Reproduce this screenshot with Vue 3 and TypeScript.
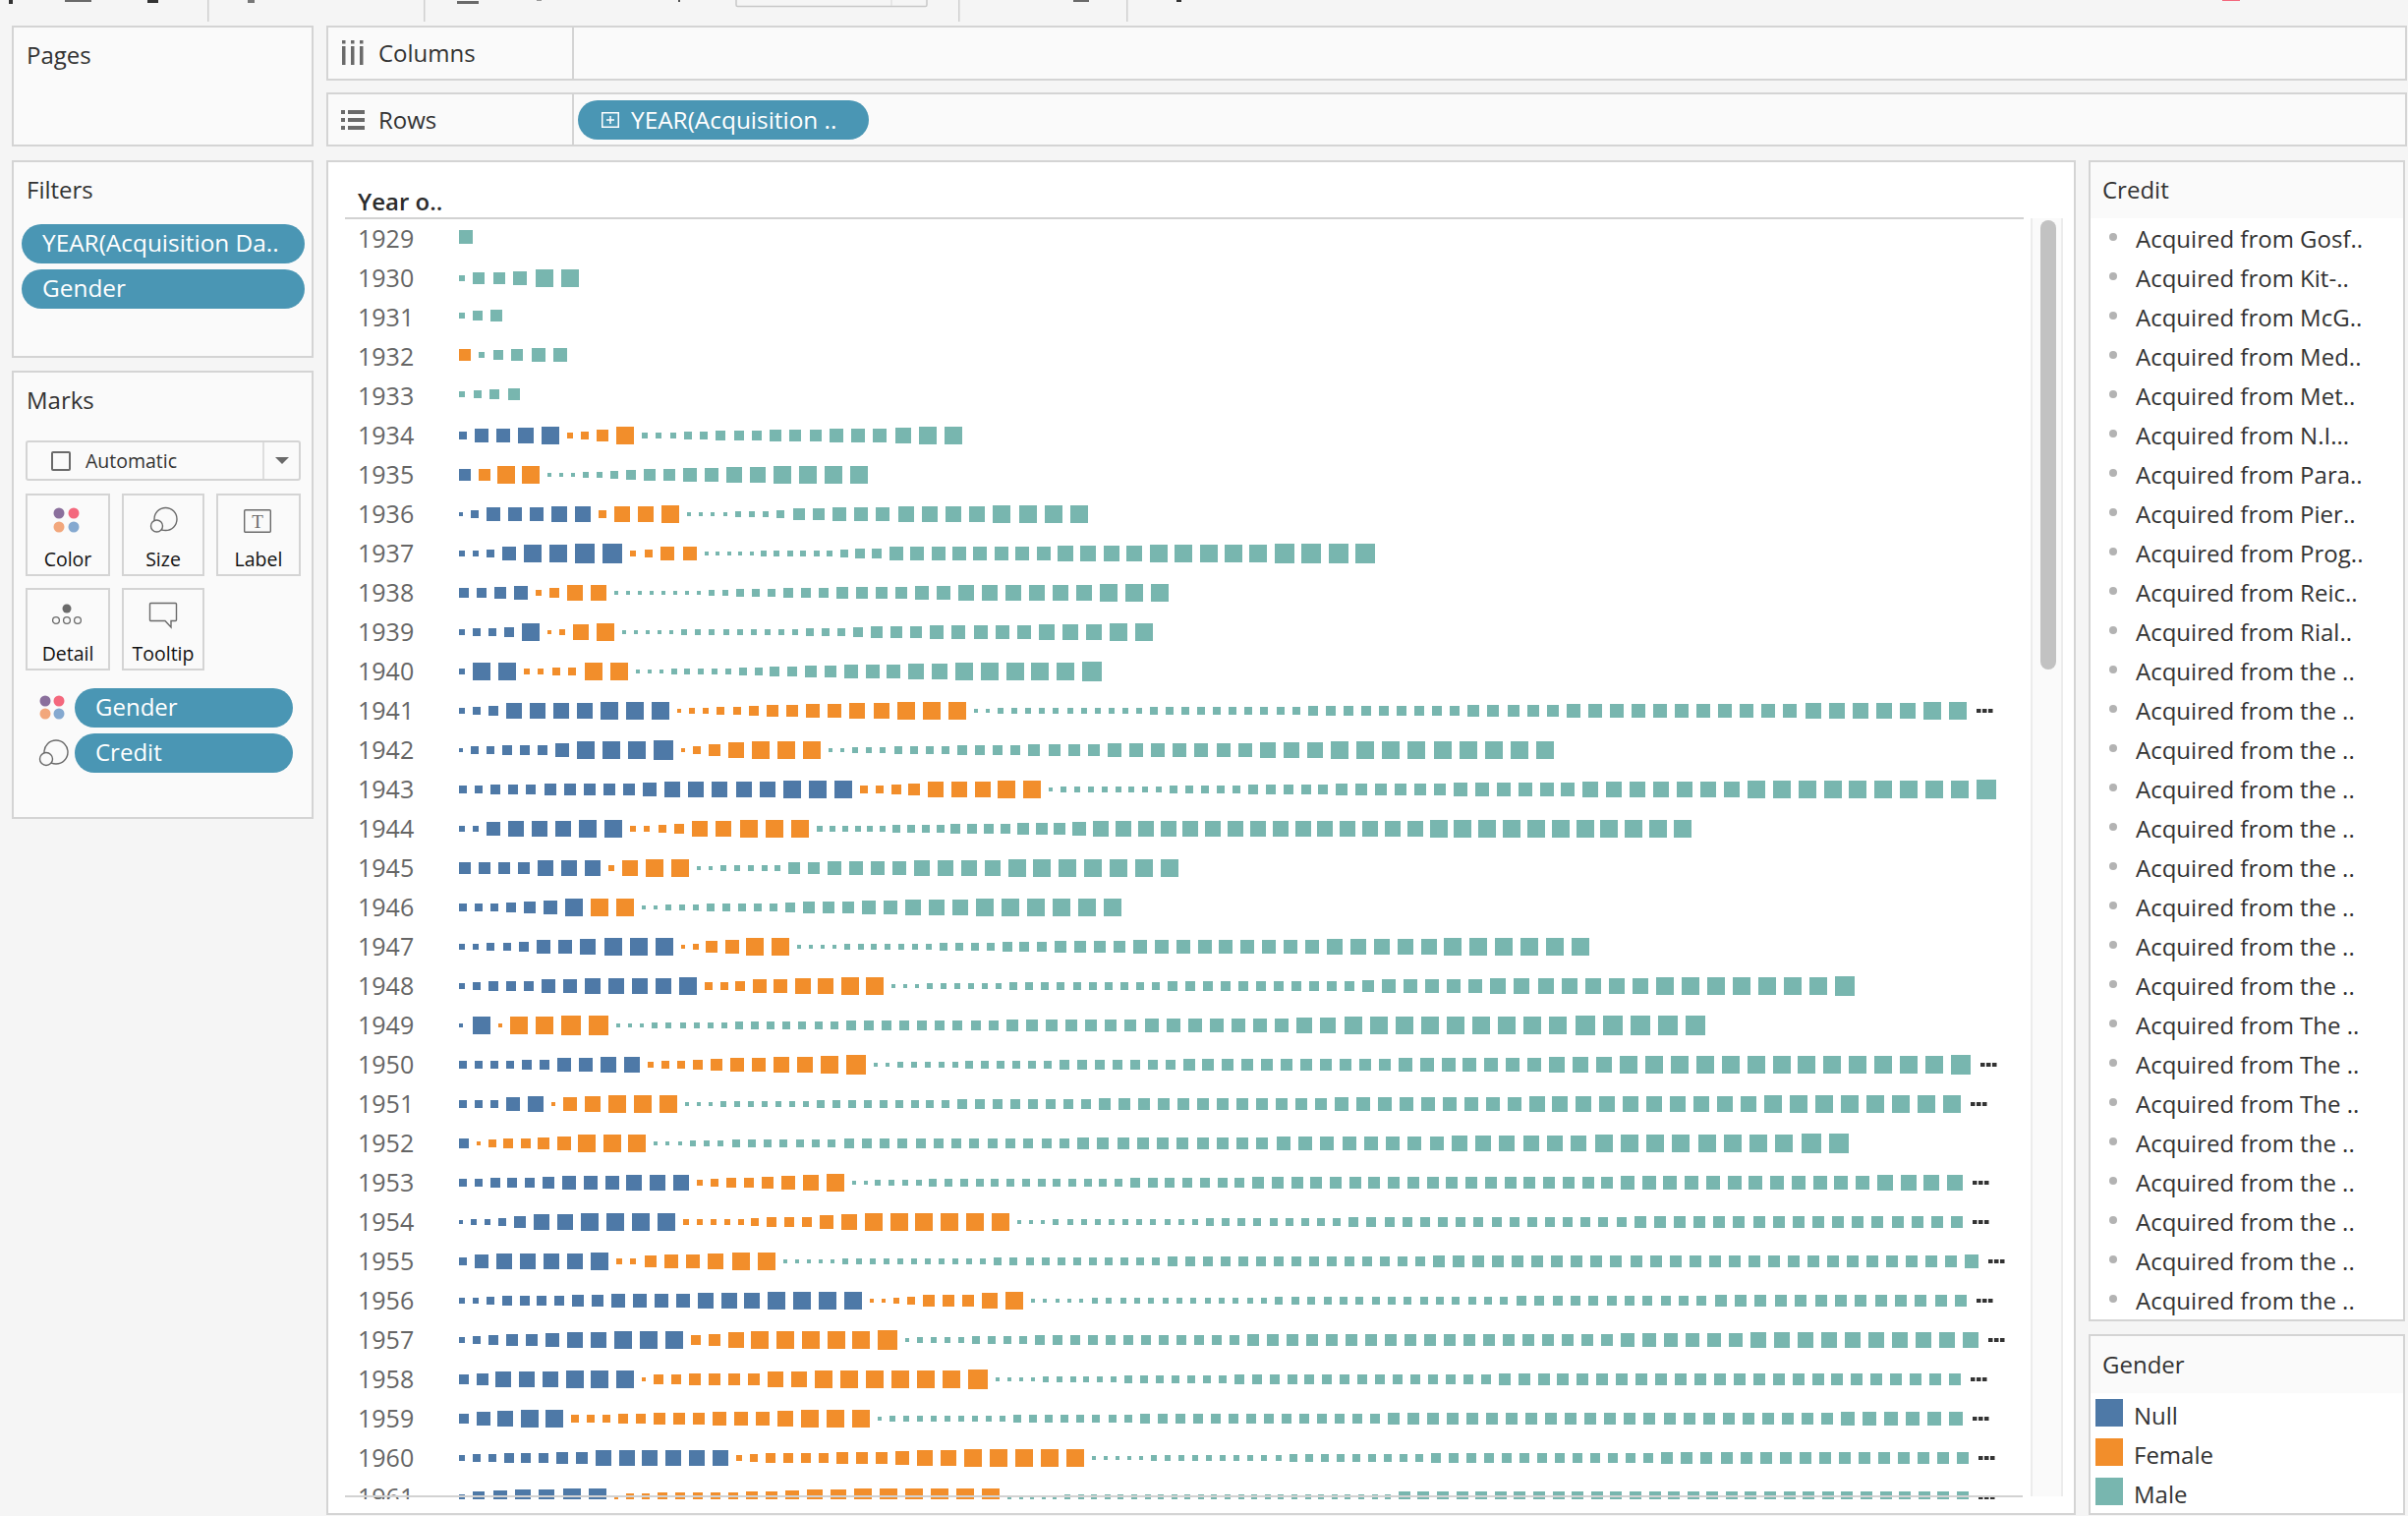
<script setup lang="ts">
type Raw = [string, number, string, number, string, number, boolean?]
interface Mark { x: number; y: number; s: number; c: string }

const NULL_C = '#4e79a7'
const FEMALE_C = '#f28e2b'
const MALE_C = '#78b6af'
const START_X = 468

// per year: null sizes, end x, female sizes, end x, male sizes, end x, overflow dots
const raw: Raw[] = [
  ['', 0, '', 0, '14', 482],
  ['', 0, '', 0, '6 12 12 14 18 18', 590],
  ['', 0, '', 0, '6 10 12', 512],
  ['', 0, '12', 480, '6 10 12 14 14', 578],
  ['', 0, '', 0, '6 8 10 12', 530],
  ['8 14 14 16 18', 570, '6 8 12 18', 646, '6*3 8*2 10*3 12*3 14*3 16 18*2', 980],
  ['12', 480, '12 18 18', 550, '4*3 6*2 8 10 12*2 14*2 16*2 18*4', 884],
  ['4 8 14*3 16*2', 602, '8 16 16 18', 692, '4*4 6*3 8 12*2 14*3 16*4 18*4', 1108],
  ['6 6 8 14 18 18 20 20', 634, '6 8 14 14', 710, '4*5 6*6 8 10*2 14*8 16*4 18*5 20*4', 1400],
  ['10 10 12 14', 538, '6 10 16 16', 618, '4*8 6*2 8*3 10*3 12*4 14*2 16*6 18*3', 1190],
  ['6 8 8 10 18', 550, '4 6 16 18', 626, '4*5 6*9 8*3 10 12*3 14*5 16*3 18*2', 1174],
  ['6 18 18', 526, '6 6 8 8 18 18', 640, '4*3 6*5 8*2 10*2 12*2 14*3 16*2 18*5 20', 1122],
  ['6 8 10 16*4 18*3', 682, '4 6 6 8 8 10 12 12 14 14 16 16 18*3', 984, '4*2 6*11 8*10 10*9 12*5 14*11 16*5 18*2', 2002, true],
  ['4 8 8 10 10 10 14 18 18 18 20', 686, '4 8 12 16 18*3', 836, '4*2 6*3 8*4 10*4 12*4 14*7 16*3 18*9', 1582],
  ['8 8 10 10 10 12*5 14 16*5 18*3', 868, '8 8 10 12 16*3 18*2', 1060, '4 6*8 8*5 10*5 12*6 14*6 16*7 18*9 20', 2032],
  ['6 6 14 16*3 18*2', 634, '6 6 8 10 16 16 18*3', 824, '6*6 8*4 10*4 12*3 14 16*15 18*11', 1722],
  ['12*4 16*3', 612, '6 16 18 18', 702, '4*2 6*5 12*2 14*4 16*4 18*7', 1200],
  ['8*3 10 12 14 18', 594, '18 18', 646, '4*2 6*3 8*5 10 12*3 14*2 16*3 18*6', 1142],
  ['6 6 8 8 10 14 14 16 18*3', 686, '4 6 12 14 18 18', 804, '4*4 6*7 8*4 10*3 12*4 14*9 16*5 18*6', 1618],
  ['6 8 10*3 14 14 16*3 16 18', 710, '8 8 10 14 14 16 16 18 18', 900, '4*3 6*6 8*10 10*11 12 14*5 16*7 18*7 20', 1888],
  ['4 18', 500, '4 18 18 20 20', 620, '4*3 6*6 8*7 10*9 12*7 14*7 16*2 18*9 20*5', 1736],
  ['8*4 10 10 14 14 16 16', 652, '6 8 8 10 12 14 14 16 16 18 20', 882, '4*2 6*5 8*6 10*7 12*11 14*7 16*3 18*13 20', 2006, true],
  ['8*3 14 16', 554, '4 14 16 18*3', 690, '4*3 6*7 8*9 10*8 12*12 14*9 16*10 18*8', 1996, true],
  ['10', 478, '4 8 10 10 12 14 18*3', 658, '4*3 6*3 8*7 10*13 12*10 14*8 16*6 18*8 20*2', 1882],
  ['8 8 10*3 12 14*3 16*3', 702, '6 8 10 10 12 14 16 18', 860, '4*2 6*4 8*13 10*7 12*19 14*12 16*4', 1998, true],
  ['4 6 6 8 12 16 16 18*4', 688, '6*5 8 10*3 14 16 18*6', 1028, '4*3 6*11 8*9 10*16 12*17', 1998, true],
  ['8 14 16*4 18', 620, '6 6 12 14 14 16 18 18', 790, '4*5 6*11 8*11 10*15 12*27 14', 2014, true],
  ['6 6 8 10*4 12 12 14*4 16*3 18*4', 878, '4 4 6 8 12*3 16 18', 1042, '4*5 6*13 8*15 10*11 12*13', 2002, true],
  ['6 8 10 12 12 14 16 16 18*3', 696, '10 12 16 18*5 20', 914, '4 6*4 8*4 10*12 12*19 14*6 16*10', 2014, true],
  ['10 12 16*3 18*3', 646, '4 10 10 12*4 16 16 18*6 20', 1006, '4*4 6*6 8*7 10*15 12*24', 1996, true],
  ['10 14 16 18 18', 574, '8*3 10 10 12*3 14*3 16 18*3', 886, '4 6*9 8*8 10*14 12*23 14*6', 1998, true],
  ['6 8 8 10*3 12 12 16*6', 742, '6 8 10*4 12*3 14 16 16 18*5', 1104, '4*5 6*10 8*9 10*13 12*16', 2004, true],
  ['6 12 14 16 16 18 18', 618, '4 8 8 10*5 12 12 14 16 16 18*6', 1018, '4*5 6*25 12*30', 2004, true],
]

function parseSizes(spec: string): number[] {
  const out: number[] = []
  for (const part of spec.split(' ')) {
    if (!part) continue
    const [s, n] = part.split('*')
    for (let i = 0; i < Number(n ?? 1); i++) out.push(Number(s))
  }
  return out
}

function layout(spec: string, start: number, end: number, c: string, mid: number): Mark[] {
  const sizes = parseSizes(spec)
  const total = sizes.reduce((a, b) => a + b, 0)
  const gap = sizes.length > 1 ? (end - start - total) / (sizes.length - 1) : 0
  let x = start
  return sizes.map((s) => {
    const m = { x: Math.round(x) - START_X, y: mid - s / 2, s, c }
    x += s + gap
    return m
  })
}

const years = raw.map((r, i) => {
  const marks: Mark[] = []
  let cursor = START_X
  const biggest = Math.max(...parseSizes(`${r[0]} ${r[2]} ${r[4]}`))
  // rows that only have small marks sit a little higher in the reference
  const mid = biggest <= 14 ? 18 : 20
  const segs: [string, number, string][] = [[r[0], r[1], NULL_C], [r[2], r[3], FEMALE_C], [r[4], r[5], MALE_C]]
  for (const [spec, end, c] of segs) {
    if (!spec) continue
    marks.push(...layout(spec, cursor, end, c, mid))
    cursor = end + 8
  }
  return { year: 1929 + i, marks, dotsAt: r[6] ? r[5] + 10 - START_X : null }
})

const credits = [
  'Gosf..', 'Kit-..', 'McG..', 'Med..', 'Met..', 'N.I...', 'Para..', 'Pier..', 'Prog..', 'Reic..', 'Rial..',
  ...Array(9).fill('the ..'), ...Array(3).fill('The ..'), ...Array(5).fill('the ..'),
].map((s) => `Acquired from ${s}`)

const legend = [
  { name: 'Null', color: NULL_C },
  { name: 'Female', color: FEMALE_C },
  { name: 'Male', color: MALE_C },
]

// what is left of the toolbar above the crop
const toolbarBits = [
  { x: 9, y: 0, w: 4, h: 4, c: '#333' },
  { x: 66, y: 0, w: 27, h: 2, c: '#6a6a6a' },
  { x: 150, y: 0, w: 11, h: 3, c: '#333' },
  { x: 252, y: 0, w: 7, h: 3, c: '#777' },
  { x: 465, y: 1, w: 22, h: 3, c: '#6a6a6a' },
  { x: 546, y: 0, w: 5, h: 1, c: '#999' },
  { x: 690, y: 0, w: 2, h: 2, c: '#555' },
  { x: 1092, y: 0, w: 16, h: 2, c: '#6a6a6a' },
  { x: 1197, y: 0, w: 5, h: 2, c: '#333' },
  { x: 2261, y: 0, w: 18, h: 1, c: '#f4687d' },
]
const toolbarSeps = [211, 431, 975, 1146]
</script>

<template>
  <div class="app">
    <svg class="toolbar" width="2450" height="22">
      <rect v-for="b in toolbarBits" :key="b.x" :x="b.x" :y="b.y" :width="b.w" :height="b.h" :fill="b.c" />
      <rect v-for="x in toolbarSeps" :key="x" :x="x" y="0" width="1.5" height="22" fill="#d0d0d0" />
      <path d="M749 0v5a1.5 1.5 0 0 0 1.5 1.5h191a1.5 1.5 0 0 0 1.5-1.5V0" fill="#f5f5f5" stroke="#c8c8c8" stroke-width="1.5" />
      <path d="M907 0v6" stroke="#d8d8d8" stroke-width="1" />
    </svg>

    <div class="workspace">
      <div class="panel pages"><div class="heading">Pages</div></div>

      <div class="shelves">
        <div class="panel shelf shelf-columns">
          <div class="shelf-label">
            <svg width="24" height="26" viewBox="0 0 24 26" fill="#6a6a6a">
              <rect x="1" y="0" width="3.5" height="3.5" /><rect x="10" y="0" width="3.5" height="3.5" /><rect x="19" y="0" width="3.5" height="3.5" />
              <rect x="1" y="6" width="3.5" height="19" /><rect x="10" y="6" width="3.5" height="19" /><rect x="19" y="6" width="3.5" height="19" />
            </svg>
            <span>Columns</span>
          </div>
        </div>
        <div class="panel shelf">
          <div class="shelf-label">
            <svg width="24" height="22" viewBox="0 0 24 22" fill="#6a6a6a">
              <rect x="0" y="1" width="4" height="4" /><rect x="7" y="1" width="17" height="4" />
              <rect x="0" y="9" width="4" height="4" /><rect x="7" y="9" width="17" height="4" />
              <rect x="0" y="17" width="4" height="4" /><rect x="7" y="17" width="17" height="4" />
            </svg>
            <span>Rows</span>
          </div>
          <div class="pill rows-pill">
            <svg width="18" height="16" viewBox="0 0 18 16" fill="none" stroke="#fff" stroke-width="1.5">
              <rect x="0.75" y="0.75" width="16.5" height="14.5" />
              <path d="M9 4v8M5 8h8" />
            </svg>
            <span>YEAR(Acquisition ..</span>
          </div>
        </div>
      </div>

      <div class="left-stack">
        <div class="panel filters">
          <div class="heading">Filters</div>
          <div class="filter-pills">
            <div class="pill">YEAR(Acquisition Da..</div>
            <div class="pill">Gender</div>
          </div>
        </div>

        <div class="panel marks">
          <div class="heading">Marks</div>
          <div class="mark-type">
            <span class="check" />
            <span class="mark-name">Automatic</span>
            <span class="caret-box"><span class="caret" /></span>
          </div>
          <div class="tiles">
            <div class="tile">
              <svg width="32" height="32" viewBox="0 0 32 32">
                <circle cx="7" cy="9" r="5.5" fill="#8a6f9c" /><circle cx="22" cy="9" r="5.5" fill="#f4687d" />
                <circle cx="7" cy="23" r="5.5" fill="#f2a77c" /><circle cx="22" cy="23" r="5.5" fill="#85a9d0" />
              </svg>
              <span>Color</span>
            </div>
            <div class="tile">
              <svg width="32" height="32" viewBox="0 0 32 32" fill="#fafafa" stroke="#6a6a6a" stroke-width="1.4">
                <circle cx="18.500" cy="15" r="11.500" /><circle cx="9.500" cy="22" r="6" />
              </svg>
              <span>Size</span>
            </div>
            <div class="tile">
              <svg width="32" height="32" viewBox="0 0 32 32">
                <rect x="1.700" y="5.700" width="26.600" height="22.600" rx="1" fill="none" stroke="#6a6a6a" stroke-width="1.4" />
                <text x="15" y="23.500" text-anchor="middle" class="tee">T</text>
              </svg>
              <span>Label</span>
            </div>
            <div class="tile">
              <svg width="32" height="32" viewBox="0 0 32 32">
                <circle cx="15" cy="10" r="4.500" fill="#6a6a6a" />
                <g fill="none" stroke="#6a6a6a" stroke-width="1.3">
                  <circle cx="4" cy="22" r="3.400" /><circle cx="15" cy="22" r="3.400" /><circle cx="26" cy="22" r="3.400" />
                </g>
              </svg>
              <span>Detail</span>
            </div>
            <div class="tile">
              <svg width="32" height="32" viewBox="0 0 32 32" fill="none" stroke="#6a6a6a" stroke-width="1.4">
                <path d="M3.500 4.500h25a1 1 0 0 1 1 1v16a1 1 0 0 1-1 1h-4.500v6.500l-6-6.500H3.500a1 1 0 0 1-1-1v-16a1 1 0 0 1 1-1z" />
              </svg>
              <span>Tooltip</span>
            </div>
          </div>
          <div class="mark-field">
            <svg width="50" height="40" viewBox="0 0 50 40">
              <circle cx="20" cy="13" r="5.500" fill="#8a6f9c" /><circle cx="34" cy="13" r="5.500" fill="#f4687d" />
              <circle cx="20" cy="26" r="5.500" fill="#f2a77c" /><circle cx="34" cy="26" r="5.500" fill="#85a9d0" />
            </svg>
            <div class="pill field-pill">Gender</div>
          </div>
          <div class="mark-field">
            <svg width="50" height="40" viewBox="0 0 50 40" fill="#fafafa" stroke="#6a6a6a" stroke-width="1.4">
              <circle cx="31" cy="19" r="12" /><circle cx="21" cy="26" r="6.500" />
            </svg>
            <div class="pill field-pill">Credit</div>
          </div>
        </div>
      </div>

      <div class="panel chart">
        <div class="chart-head"><span>Year o..</span></div>
        <div class="chart-body">
          <div class="rows-wrap">
            <div class="rows">
              <div v-for="row in years" :key="row.year" class="year-row">
                <span class="year">{{ row.year }}</span>
                <svg class="marks-svg" width="1591" height="40">
                  <rect v-for="(m, i) in row.marks" :key="i" :x="m.x" :y="m.y" :width="m.s" :height="m.s" :fill="m.c" />
                  <g v-if="row.dotsAt !== null" fill="#333">
                    <rect :x="row.dotsAt" y="18" width="4.500" height="4" />
                    <rect :x="row.dotsAt + 6" y="18" width="4.500" height="4" />
                    <rect :x="row.dotsAt + 12" y="18" width="4.500" height="4" />
                  </g>
                </svg>
              </div>
            </div>
          </div>
          <div class="scrollbar"><div class="thumb" /></div>
        </div>
      </div>

      <div class="right-stack">
        <div class="panel credit">
          <div class="card-head">Credit</div>
          <div class="credit-list">
            <div v-for="(c, i) in credits" :key="i" class="credit-row">
              <span class="dot" />
              <span>{{ c }}</span>
            </div>
          </div>
        </div>
        <div class="panel gender">
          <div class="card-head">Gender</div>
          <div class="legend">
            <div v-for="l in legend" :key="l.name" class="legend-row">
              <span class="swatch" :style="{ background: l.color }" />
              <span class="legend-name">{{ l.name }}</span>
            </div>
          </div>
        </div>
      </div>
    </div>
  </div>
</template>

<style scoped>
.app { width: 2450px; height: 1542px; overflow: hidden; background: #f5f5f5; font-family: 'Open Sans', sans-serif; font-size: 24px; color: #333; }
.toolbar { display: block; }
.workspace { display: grid; grid-template-columns: 307px 1780px 322px; grid-template-rows: 123px 1378px; column-gap: 13px; row-gap: 14px; padding: 4px 0 0 12px; }

.panel { box-sizing: border-box; border: 2px solid #d4d4d4; background: #fafafa; }
.heading { line-height: 34px; padding: 11px 0 0 13px; }
.pill { box-sizing: border-box; height: 40px; border-radius: 20px; background: #4a96b4; color: #fff; line-height: 38px; white-space: nowrap; }

.shelves { grid-column: 2 / 4; display: flex; flex-direction: column; gap: 12px; margin-right: -2px; }
.shelf { height: 55px; display: flex; align-items: center; }
.shelf-columns { height: 56px; }
.shelf-columns .shelf-label { padding-bottom: 1px; }
.shelf-label { box-sizing: border-box; width: 250px; height: 100%; display: flex; align-items: center; gap: 14px; padding-left: 13px; border-right: 2px solid #d4d4d4; }
.rows-pill { width: 296px; margin-left: 4px; display: flex; align-items: center; gap: 12px; padding-left: 24px; font-size: 24.400px; }

.left-stack { display: flex; flex-direction: column; gap: 13px; }
.filters { height: 201px; }
.filter-pills { display: flex; flex-direction: column; gap: 6px; margin: 18px 7px 0 8px; font-size: 24.400px; }
.filter-pills .pill { padding-left: 21px; }

.marks { height: 456px; }
.mark-type { box-sizing: border-box; height: 41px; margin: 24px 11px 0 12px; border: 2px solid #d4d4d4; border-radius: 3px; display: flex; align-items: center; padding-left: 24px; font-size: 19.500px; }
.check { box-sizing: border-box; width: 20px; height: 20px; border: 2px solid #6a6a6a; border-radius: 2px; }
.mark-name { margin-left: 15px; flex: 1; }
.caret-box { box-sizing: border-box; width: 37px; height: 100%; border-left: 2px solid #dedede; display: flex; align-items: center; justify-content: center; }
.caret { width: 0; height: 0; border-left: 7px solid transparent; border-right: 7px solid transparent; border-top: 7px solid #6a6a6a; }
.tiles { display: grid; grid-template-columns: 86px 84px 86px; grid-auto-rows: 84px; gap: 12px; margin: 13px 11px 0 12px; }
.tile { box-sizing: border-box; border: 2px solid #d4d4d4; display: flex; flex-direction: column; align-items: center; font-size: 19.500px; color: #111; padding-top: 9px; line-height: 28px; }
.tile svg { height: 32px; margin-bottom: 10px; }
.tee { font-family: 'Liberation Serif', serif; font-size: 19px; fill: #6a6a6a; }
.mark-field { display: flex; height: 40px; margin: 0 0 6px 12px; }
.tiles + .mark-field { margin-top: 18px; }
.field-pill { width: 222px; padding-left: 21px; }

.chart { background: #fff; display: flex; flex-direction: column; width: 1780px; height: 1378px; }
.chart-head { box-sizing: border-box; height: 58px; margin: 0 51px 0 17px; border-bottom: 2px solid #d2d2d2; padding: 23px 0 0 13px; line-height: 34px; font-weight: 600; color: #2c2c2c; }
.chart-body { display: flex; align-items: flex-start; height: 1303px; padding-left: 17px; }
.rows-wrap { position: relative; width: 1707px; height: 1303px; overflow: hidden; margin-top: -1px; }
/* the axis rule is drawn over the cut-off last row */
.rows-wrap::after { content: ''; position: absolute; left: 0; right: 0; top: 1299px; height: 2px; background: #d2d2d2; }
.rows { display: flex; flex-direction: column; padding-top: 1px; }
.year-row { display: flex; align-items: center; height: 40px; flex-shrink: 0; }
.year { box-sizing: border-box; width: 116px; padding: 0 0 2px 13px; color: #666; font-size: 25px; }
.marks-svg { display: block; }
.scrollbar { box-sizing: border-box; width: 33px; height: 1300px; margin-left: 8px; margin-top: -1px; background: #fafafa; border-left: 2px solid #ececec; border-right: 2px solid #ececec; padding: 2px 0 0 8px; }
.thumb { width: 16px; height: 457px; border-radius: 8px; background: #c2c2c2; }

.right-stack { display: flex; flex-direction: column; gap: 13px; }
.credit { height: 1182px; background: #fff; }
.gender { height: 184px; background: #fff; }
.card-head { height: 57px; line-height: 56px; padding-left: 12px; background: #fafafa; }
.credit-list { display: flex; flex-direction: column; }
.credit-row { box-sizing: border-box; display: flex; align-items: center; height: 40px; padding: 1px 0 0 19px; line-height: 39px; white-space: nowrap; }
.dot { width: 8px; height: 8px; border-radius: 50%; background: #b3b3b3; margin-right: 19px; margin-top: -4px; }
.gender .card-head { height: 58px; line-height: 58px; }
.legend { padding: 6px 0 0 5px; }
.legend-row { display: flex; align-items: flex-start; height: 40px; gap: 11px; }
.swatch { width: 28px; height: 28px; }
.legend-name { line-height: 28px; margin-top: 3px; }
</style>

<style>
html, body { margin: 0; background: #f5f5f5; }
</style>
